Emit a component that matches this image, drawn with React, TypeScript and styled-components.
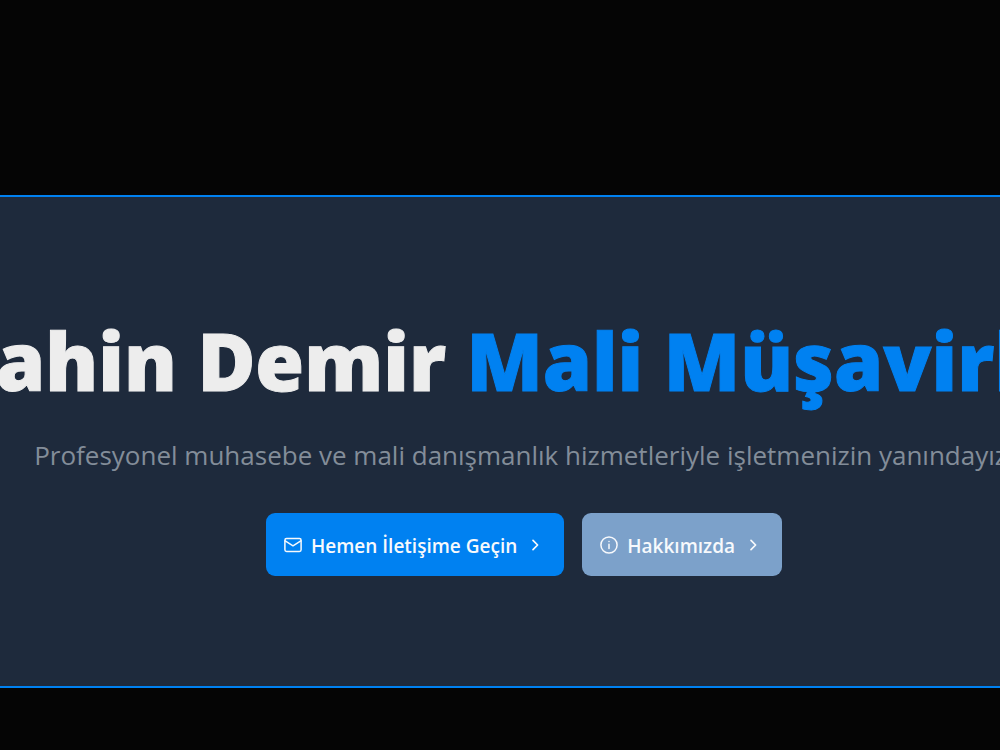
import React from "react";
import styled, { createGlobalStyle } from "styled-components";

const GlobalStyle = createGlobalStyle`
  *, *::before, *::after { box-sizing: border-box; }
  body {
    margin: 0;
    background: #050505;
    color: #ededed;
    font-family: "Open Sans", "Noto Sans", sans-serif;
    overflow-x: hidden;
  }
`;

const Page = styled.main`
  padding: 195px 0 62px;
`;

const Hero = styled.section`
  display: flex;
  flex-direction: column;
  align-items: center;
  padding: 109px 0 110px 48px;
  overflow: hidden;
  white-space: nowrap;
  background: #1e2a3c;
  border-top: 2px solid #0081f1;
  border-bottom: 2px solid #0081f1;
`;

const Title = styled.h1`
  margin: 0;
  font-size: 79px;
  line-height: 110px;
  font-weight: 900;
  -webkit-text-stroke: 1px currentColor;
`;

const Accent = styled.span`
  color: #0081f1;
`;

const Lead = styled.p`
  margin: 21px 0 0;
  font-size: 26px;
  line-height: 36px;
  color: #838d99;
`;

const Actions = styled.div`
  display: flex;
  gap: 18px;
  margin-top: 40px;
`;

const Button = styled.button<{ $tone: "primary" | "muted" }>`
  display: flex;
  align-items: center;
  gap: 8px;
  height: 63px;
  padding: 0 19px 0 17px;
  border: 0;
  border-radius: 9px;
  background: ${(p) => (p.$tone === "primary" ? "#0081f1" : "#7ca1ca")};
  color: #f7f9fc;
  font-family: inherit;
  font-size: 19px;
  font-weight: 600;
  line-height: 28px;
`;

const Label = styled.span`
  padding-top: 2px;
`;

const Icon = styled.svg.attrs({ viewBox: "0 0 20 20", "aria-hidden": true })`
  flex: none;
  width: 20px;
  height: 20px;
  fill: none;
  stroke: currentColor;
  stroke-width: 1.5;
  stroke-linecap: round;
  stroke-linejoin: round;
`;

const MailIcon = () => (
  <Icon>
    <rect x="1.9" y="3.6" width="16.2" height="12.9" rx="1.7" />
    <path d="M2.2 5.8 10 10.8 17.8 5.8" />
  </Icon>
);

const InfoIcon = () => (
  <Icon>
    <circle cx="10" cy="10" r="8.1" />
    <path d="M10 9.2V13.4M10 6.5V6.6" />
  </Icon>
);

const ChevronIcon = () => (
  <Icon>
    <path d="M8 5.3 12.6 10 8 14.7" strokeWidth="1.7" />
  </Icon>
);

export default function App() {
  return (
    <>
      <GlobalStyle />
      <Page>
        <Hero>
          <Title>
            Şahin Demir <Accent>Mali Müşavirlik</Accent>
          </Title>
          <Lead>Profesyonel muhasebe ve mali danışmanlık hizmetleriyle işletmenizin yanındayız.</Lead>
          <Actions>
            <Button type="button" $tone="primary">
              <MailIcon />
              <Label>Hemen İletişime Geçin</Label>
              <ChevronIcon />
            </Button>
            <Button type="button" $tone="muted">
              <InfoIcon />
              <Label>Hakkımızda</Label>
              <ChevronIcon />
            </Button>
          </Actions>
        </Hero>
      </Page>
    </>
  );
}
